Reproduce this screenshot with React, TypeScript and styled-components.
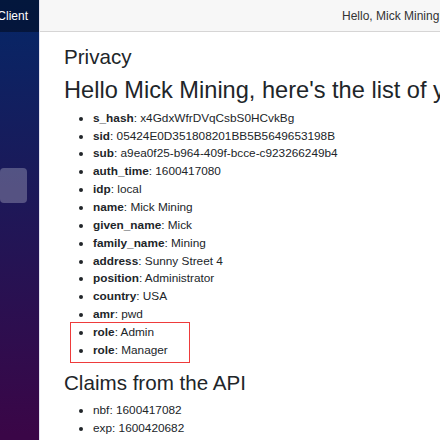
import React from "react";
import styled, { createGlobalStyle } from "styled-components";

const GlobalStyle = createGlobalStyle`
  html, body { margin: 0; padding: 0; overflow: hidden; }
  body {
    font-family: "Liberation Sans", Arial, Helvetica, sans-serif;
    color: #212529;
    font-size: 11.8px;
    line-height: 1.5;
  }
`;

const Page = styled.div`
  display: flex;
  width: 440px;
  height: 440px;
  overflow: hidden;
`;

const Sidebar = styled.aside`
  flex: 0 0 39px;
  width: 39px;
  min-width: 0;
  overflow: hidden;
  display: flex;
  flex-direction: column;
  background: linear-gradient(180deg, rgb(5, 39, 103) 0px, #3a0647 434px);
`;

const Brand = styled.div`
  height: 32px;
  flex: 0 0 auto;
  display: flex;
  align-items: center;
  justify-content: flex-end;
  padding-right: 11px;
  background: rgba(0, 0, 0, 0.4);
  color: #fff;
  font-size: 12px;
  white-space: nowrap;
  overflow: hidden;
`;

const Nav = styled.ul`
  list-style: none;
  margin: 0;
  padding: 11.8px 0 0;
  display: flex;
  flex-direction: column;
`;

const NavItem = styled.li`
  padding: 0 11.8px 5.9px 0;
`;

const NavLink = styled.div<{ $active?: boolean }>`
  height: 35.4px;
  border-radius: 4px;
  background: ${(p) => (p.$active ? "rgba(255, 255, 255, 0.25)" : "transparent")};
`;

const Main = styled.main`
  flex: 1;
  display: flex;
  flex-direction: column;
  min-width: 0;
  border-left: 1px solid #e4e3f0;
`;

const TopRow = styled.header`
  height: 32px;
  box-sizing: border-box;
  flex: 0 0 auto;
  display: flex;
  align-items: center;
  padding-left: 302px;
  background: #f7f7f7;
  border-bottom: 1px solid #d6d5d5;
  font-size: 12px;
  color: #333;
  white-space: nowrap;
  overflow: hidden;
`;

const Content = styled.div`
  padding: 13px 0 0 24px;
`;

const Title = styled.h3`
  margin: 0 0 5.9px;
  font-size: 20.6px;
  font-weight: 500;
  line-height: 1.2;
  white-space: nowrap;
`;

const Greeting = styled.h2`
  margin: 0 0 5.9px;
  font-size: 23.6px;
  font-weight: 500;
  line-height: 1.2;
  white-space: nowrap;
`;

const ClaimList = styled.ul<{ $last?: boolean }>`
  margin: 0 0 ${(p) => (p.$last ? "11.8px" : "0")};
  padding-left: 29px;
  list-style: disc;
`;

const HighlightList = styled(ClaimList)`
  position: relative;
  &::after {
    content: "";
    position: absolute;
    left: 6px;
    top: -2px;
    width: 120px;
    bottom: -3px;
    border: 1.5px solid #ee3b3b;
    box-sizing: border-box;
    pointer-events: none;
  }
`;

const Item = styled.li`
  white-space: nowrap;
  line-height: 17.85px;
  b { font-weight: 700; }
`;

const userClaims: [string, string][] = [
  ["s_hash", "x4GdxWfrDVqCsbS0HCvkBg"],
  ["sid", "05424E0D351808201BB5B5649653198B"],
  ["sub", "a9ea0f25-b964-409f-bcce-c923266249b4"],
  ["auth_time", "1600417080"],
  ["idp", "local"],
  ["name", "Mick Mining"],
  ["given_name", "Mick"],
  ["family_name", "Mining"],
  ["address", "Sunny Street 4"],
  ["position", "Administrator"],
  ["country", "USA"],
  ["amr", "pwd"],
];

const roleClaims: [string, string][] = [
  ["role", "Admin"],
  ["role", "Manager"],
];

const apiClaims: [string, string][] = [
  ["nbf", "1600417082"],
  ["exp", "1600420682"],
];

export default function App() {
  return (
    <>
      <GlobalStyle />
      <Page>
        <Sidebar>
          <Brand>Client</Brand>
          <Nav>
            <NavItem><NavLink /></NavItem>
            <NavItem><NavLink /></NavItem>
            <NavItem><NavLink /></NavItem>
            <NavItem><NavLink $active /></NavItem>
          </Nav>
        </Sidebar>
        <Main>
          <TopRow>Hello, Mick Mining!</TopRow>
          <Content>
            <Title>Privacy</Title>
            <Greeting>Hello Mick Mining, here's the list of your claims:</Greeting>
            <ClaimList>
              {userClaims.map(([k, v], i) => (
                <Item key={i}>
                  <b>{k}</b>: {v}
                </Item>
              ))}
            </ClaimList>
            <HighlightList $last>
              {roleClaims.map(([k, v], i) => (
                <Item key={i}>
                  <b>{k}</b>: {v}
                </Item>
              ))}
            </HighlightList>
            <Title>Claims from the API</Title>
            <ClaimList $last>
              {apiClaims.map(([k, v], i) => (
                <Item key={i}>
                  {k}: {v}
                </Item>
              ))}
            </ClaimList>
          </Content>
        </Main>
      </Page>
    </>
  );
}
